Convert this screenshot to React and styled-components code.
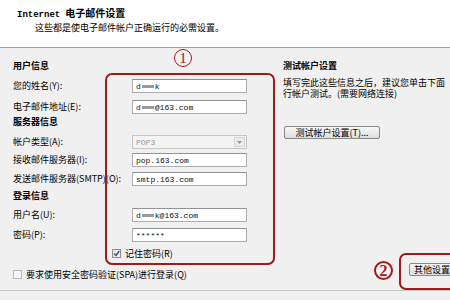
import React from 'react';
import styled, { createGlobalStyle } from 'styled-components';

const GlobalStyle = createGlobalStyle`
    body {
        margin: 0;
        overflow: hidden;
        font-family: "Noto Sans CJK SC", "Liberation Sans", sans-serif;
    }
`;

const Dialog = styled.div`
    width: 450px;
    height: 300px;
    background: #f0f0f0;
    position: relative;
    overflow: hidden;
    color: #000;
    font-size: 9px;
`;

const Header = styled.div`
    height: 48px;
    box-sizing: border-box;
    background: #fff;
    border-bottom: 1px solid #a0a0a0;
    padding: 6px 0 0 17px;
`;

const Title = styled.div`
    font-size: 10px;
    font-weight: bold;
    line-height: 13px;
    white-space: nowrap;
`;

const Mono = styled.span`
    font-family: "Liberation Mono", monospace;
    font-size: 9px;
    margin-right: 5px;
`;

const Subtitle = styled.div`
    margin: 0 0 0 18px;
    line-height: 12px;
    white-space: nowrap;
`;

const Body = styled.div`
    display: flex;
    height: 243px;
    box-sizing: border-box;
    padding-top: 11px;
    border-bottom: 1px solid #c8c8c8;
`;

const LeftCol = styled.div`
    width: 270px;
    padding-left: 13px;
    box-sizing: border-box;
    display: flex;
    flex-direction: column;
`;

const RightCol = styled.div`
    flex: 1;
    padding-left: 13px;
    display: flex;
    flex-direction: column;
    white-space: nowrap;
    min-width: 0;
`;

const Heading = styled.div`
    height: 14px;
    line-height: 14px;
    font-weight: bold;
    margin-top: ${p => p.$mt || 0}px;
`;

const Row = styled.div`
    display: flex;
    align-items: center;
    height: 14px;
    margin-top: ${p => p.$mt || 0}px;
    padding-left: ${p => p.$indent || 0}px;
    white-space: nowrap;
`;

const Label = styled.div`
    width: 119px;
    flex: none;
    line-height: 14px;
`;

const Input = styled.div`
    width: 115px;
    height: 14px;
    box-sizing: border-box;
    background: #fff;
    border: 1px solid #abadb3;
    border-top-color: #8e9299;
    padding-left: 3px;
    display: flex;
    align-items: center;
    font-family: "Liberation Mono", monospace;
    font-size: 8px;
    color: #111;
`;

const Select = styled(Input)`
    background: #f4f4f4;
    border-color: #c6c6c6;
    color: #9a9a9a;
    justify-content: space-between;
    padding-right: 1px;
`;

const Arrow = styled.div`
    width: 11px;
    height: 10px;
    background: #ececec;
    border: 1px solid #d4d4d4;
    box-sizing: border-box;
    display: flex;
    align-items: center;
    justify-content: center;
`;

const Redacted = styled.span`
    display: inline-block;
    width: ${p => p.$w || 14}px;
    height: 3px;
    background: #9a9a9a;
    filter: blur(0.6px);
    margin: 0 1px;
`;

const Box = styled.div`
    width: 9px;
    height: 9px;
    box-sizing: border-box;
    border: 1px solid ${p => (p.$checked ? '#8f8f8f' : '#b8b8b8')};
    background: ${p => (p.$checked ? '#e9eef5' : '#f7f7f7')};
    margin-right: 4px;
    display: flex;
    align-items: center;
    justify-content: center;
`;

const InfoText = styled.div`
    margin-top: 4px;
    line-height: 11px;
`;

const Button = styled.div`
    display: inline-flex;
    align-items: center;
    justify-content: ${p => (p.$start ? 'flex-start' : 'center')};
    padding-left: ${p => (p.$start ? 4 : 0)}px;
    height: 13px;
    width: ${p => p.$w}px;
    flex: none;
    box-sizing: border-box;
    border: 1px solid #8a8a8a;
    border-radius: 2px;
    background: linear-gradient(#f6f6f6, #dedede);
    margin-top: ${p => p.$mt || 0}px;
    margin-left: ${p => p.$ml || 0}px;
    line-height: 11px;
`;

const BottomArea = styled.div`
    margin-top: auto;
    margin-bottom: 14px;
    display: flex;
`;

const Mark = styled.div`
    position: absolute;
    left: ${p => p.$x}px;
    top: ${p => p.$y}px;
    width: ${p => p.$w}px;
    height: ${p => p.$h}px;
    border: 2px solid #a01a1a;
    border-radius: 7px;
    box-sizing: border-box;
`;

const Circle = styled.div`
    position: absolute;
    left: ${p => p.$x}px;
    top: ${p => p.$y}px;
    width: ${p => p.$d}px;
    height: ${p => p.$d}px;
    box-sizing: border-box;
    border: ${p => p.$b}px solid #a81818;
    border-radius: 50%;
    color: #a81818;
    font-family: "Liberation Serif", serif;
    font-size: ${p => p.$fs}px;
    font-weight: ${p => (p.$bold ? 'bold' : 'normal')};
    display: flex;
    align-items: center;
    justify-content: center;
    line-height: 1;
`;

const Check = () => (
    <svg width="7" height="7" viewBox="0 0 7 7">
        <path d="M1 3.5 L3 5.5 L6.2 1" fill="none" stroke="#3a4a66" strokeWidth="1.3" />
    </svg>
);

const App = () => {
    return (
        <Dialog>
            <GlobalStyle />
            <Header>
                <Title><Mono>Internet</Mono>电子邮件设置</Title>
                <Subtitle>这些都是使电子邮件帐户正确运行的必需设置。</Subtitle>
            </Header>
            <Body>
                <LeftCol>
                    <Heading>用户信息</Heading>
                    <Row $mt={6}>
                        <Label>您的姓名(Y):</Label>
                        <Input>d<Redacted $w={12} />k</Input>
                    </Row>
                    <Row $mt={7}>
                        <Label>电子邮件地址(E):</Label>
                        <Input>d<Redacted $w={12} />@163.com</Input>
                    </Row>
                    <Heading $mt={1}>服务器信息</Heading>
                    <Row $mt={6}>
                        <Label>帐户类型(A):</Label>
                        <Select>
                            POP3
                            <Arrow>
                                <svg width="5" height="3" viewBox="0 0 5 3">
                                    <path d="M0 0 L5 0 L2.5 3 Z" fill="#9a9a9a" />
                                </svg>
                            </Arrow>
                        </Select>
                    </Row>
                    <Row $mt={4}>
                        <Label>接收邮件服务器(I):</Label>
                        <Input>pop.163.com</Input>
                    </Row>
                    <Row $mt={5}>
                        <Label>发送邮件服务器(SMTP)(O):</Label>
                        <Input>smtp.163.com</Input>
                    </Row>
                    <Heading $mt={3}>登录信息</Heading>
                    <Row $mt={5}>
                        <Label>用户名(U):</Label>
                        <Input>d<Redacted $w={12} />k@163.com</Input>
                    </Row>
                    <Row $mt={6}>
                        <Label>密码(P):</Label>
                        <Input>******</Input>
                    </Row>
                    <Row $mt={4} $indent={99}>
                        <Box $checked><Check /></Box>
                        记住密码(R)
                    </Row>
                    <Row $mt={7}>
                        <Box />
                        要求使用安全密码验证(SPA)进行登录(Q)
                    </Row>
                </LeftCol>
                <RightCol>
                    <Heading>测试帐户设置</Heading>
                    <InfoText>
                        填写完此这些信息之后，建议您单击下面<br />
                        行帐户测试。(需要网络连接)
                    </InfoText>
                    <div>
                        <Button $w={96} $mt={27} $ml={1}>测试帐户设置(T)...</Button>
                    </div>
                    <BottomArea>
                        <Button $w={44} $ml={126} $start>其他设置</Button>
                    </BottomArea>
                </RightCol>
            </Body>
            <Mark $x={105} $y={73} $w={170} $h={192} />
            <Mark $x={399} $y={253} $w={80} $h={37} />
            <Circle $x={174} $y={49} $d={18} $b={1.5} $fs={15}>1</Circle>
            <Circle $x={374} $y={261} $d={19} $b={2} $fs={16} $bold>2</Circle>
        </Dialog>
    );
};

export default App;
